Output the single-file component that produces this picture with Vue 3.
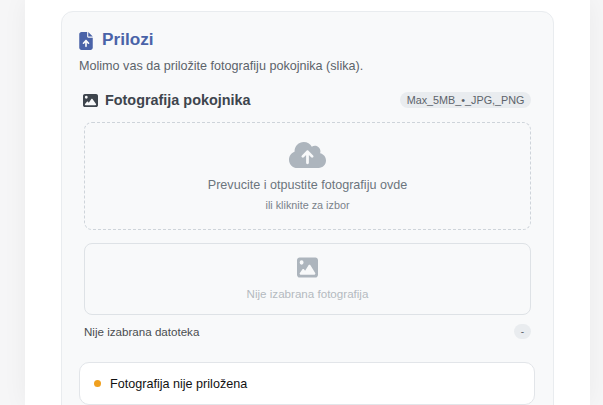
<template>
  <div class="page">
    <main class="shell">
      <section class="card">
        <h2 class="title">
          <svg class="title-icon" viewBox="0 0 384 512"><path d="M64 0C28.7 0 0 28.7 0 64V448c0 35.3 28.7 64 64 64H320c35.3 0 64-28.7 64-64V160H256c-17.7 0-32-14.3-32-32V0H64zM256 0V128H384L256 0zM216 408c0 13.3-10.7 24-24 24s-24-10.7-24-24V305.9l-31 31c-9.4 9.4-24.6 9.4-33.9 0s-9.4-24.6 0-33.9l72-72c9.4-9.4 24.6-9.4 33.9 0l72 72c9.4 9.4 9.4 24.6 0 33.9s-24.6 9.4-33.9 0l-31-31V408z"/></svg>
          <span class="title-text">Prilozi</span>
        </h2>
        <p class="lead">Molimo vas da priložite fotografiju pokojnika (slika).</p>
        <div class="upload">
          <div class="upload-head">
            <div class="label">
              <svg class="label-icon" viewBox="0 0 512 512"><path :d="imagePath"/></svg>
              <span>Fotografija pokojnika</span>
            </div>
            <span class="pill">Max_5MB_•_JPG,_PNG</span>
          </div>
          <div class="drop">
            <svg class="cloud" viewBox="0 0 640 512"><path d="M144 480C64.5 480 0 415.5 0 336c0-62.8 40.2-116.2 96.2-135.9c-.1-2.7-.2-5.4-.2-8.1c0-88.4 71.6-160 160-160c59.3 0 111 32.2 138.7 80.2C409.9 102 428.3 96 448 96c53 0 96 43 96 96c0 12.2-2.3 23.8-6.4 34.6C596 238.4 640 290.1 640 352c0 70.7-57.3 128-128 128H144zm79-217c-9.4 9.4-9.4 24.6 0 33.9s24.6 9.4 33.9 0l39-39V392c0 13.3 10.7 24 24 24s24-10.7 24-24V257.9l39 39c9.4 9.4 24.6 9.4 33.9 0s9.4-24.6 0-33.9l-80-80c-9.4-9.4-24.6-9.4-33.9 0l-80 80z"/></svg>
            <div class="drop-main">Prevucite i otpustite fotografiju ovde</div>
            <div class="drop-sub">ili kliknite za izbor</div>
          </div>
          <div class="preview">
            <svg class="preview-icon" viewBox="0 0 512 512" preserveAspectRatio="none"><path :d="imagePath"/></svg>
            <div class="preview-text">Nije izabrana fotografija</div>
          </div>
          <div class="file-row">
            <span class="file-name">Nije izabrana datoteka</span>
            <span class="file-size">-</span>
          </div>
        </div>
        <div class="status">
          <span class="dot"></span>
          <span>Fotografija nije priložena</span>
        </div>
      </section>
    </main>
  </div>
</template>

<script setup>
const imagePath = 'M0 96C0 60.7 28.7 32 64 32H448c35.3 0 64 28.7 64 64V416c0 35.3-28.7 64-64 64H64c-35.3 0-64-28.7-64-64V96zM323.8 202.5c-4.5-6.6-11.9-10.5-19.8-10.5s-15.4 3.9-19.8 10.5l-87 127.6L170.7 297c-4.6-5.7-11.5-9-18.7-9s-14.2 3.3-18.7 9l-64 80c-5.8 7.2-6.9 17.1-2.9 25.4s12.4 13.6 21.6 13.6h96 32H424c8.9 0 17.1-4.9 21.2-12.8s3.6-17.4-1.4-24.7l-120-176zM112 192a48 48 0 1 0 0-96 48 48 0 1 0 0 96z'
</script>

<style>
html, body { margin: 0; height: 405px; overflow: hidden; background: #f6f6f7; }
</style>

<style scoped>
.page {
  height: 405px;
  overflow: hidden;
  padding: 0 13px 0 25px;
  font-family: "Liberation Sans", Arial, sans-serif;
}
.shell {
  background: #fff;
  padding: 11px 36px 0;
  height: 405px;
  box-sizing: border-box;
  box-shadow: 0 0 24px rgba(0, 0, 0, 0.05);
}
.card {
  background: #f8f9fa;
  border: 1px solid #e9ecef;
  border-radius: 12px;
  padding: 18px 18px 18px 17px;
  height: 500px;
  box-sizing: border-box;
}
.title {
  display: flex;
  align-items: center;
  gap: 9px;
  margin: 0;
  height: 21px;
  font-size: 17.2px;
  font-weight: 700;
  line-height: 21px;
  color: #4a63a8;
}
.title-text { padding-bottom: 2px; }
.title-icon { width: 14px; height: 18px; fill: #4a63a8; flex: none; }
.lead { margin: 6px 0 0; font-size: 12.6px; line-height: 18px; color: #5c636a; }
.upload { padding: 0 4px 0 5px; }
.upload-head {
  display: flex;
  align-items: center;
  justify-content: space-between;
  margin-top: 16px;
  height: 18px;
}
.label {
  display: flex;
  align-items: center;
  gap: 7px;
  font-size: 14.4px;
  font-weight: 700;
  color: #3e454d;
}
.label-icon { width: 15px; height: 15px; fill: #3e454d; margin-left: -1px; }
.pill {
  padding: 0 6.5px;
  border-radius: 10px;
  background: #e9ecef;
  font-size: 10.8px;
  line-height: 16px;
  color: #5c636a;
}
.drop {
  margin-top: 13px;
  height: 108px;
  box-sizing: border-box;
  border: 1px dashed #ced4da;
  border-radius: 8px;
  padding-top: 17px;
  display: flex;
  flex-direction: column;
  align-items: center;
}
.cloud { width: 37px; height: 30px; fill: #adb5bd; }
.drop-main { margin-top: 7px; font-size: 12.6px; line-height: 16px; color: #6c757d; }
.drop-sub { margin-top: 5px; font-size: 10.8px; line-height: 14px; color: #7a828a; }
.preview {
  margin-top: 13px;
  height: 72px;
  box-sizing: border-box;
  border: 1px solid #dee2e6;
  border-radius: 8px;
  padding-top: 12px;
  display: flex;
  flex-direction: column;
  align-items: center;
}
.preview-icon { width: 21px; height: 23px; fill: #adb5bd; }
.preview-text { margin-top: 7px; font-size: 11.6px; line-height: 16px; color: #b4bac0; }
.file-row {
  display: flex;
  justify-content: space-between;
  align-items: center;
  margin-top: 8px;
  height: 16px;
}
.file-name { font-size: 11.6px; color: #4a4d50; }
.file-size {
  width: 17px;
  height: 15px;
  border-radius: 8px;
  background: #e9ecef;
  font-size: 10px;
  line-height: 15px;
  text-align: center;
  color: #5c636a;
}
.status {
  display: flex;
  align-items: center;
  gap: 9px;
  margin-top: 23px;
  height: 43px;
  box-sizing: border-box;
  padding: 0 14px;
  background: #fff;
  border: 1px solid #e2e5e9;
  border-radius: 10px;
  font-size: 12.6px;
  color: #111;
}
.dot { width: 7px; height: 7px; border-radius: 50%; background: #f0a01e; flex: none; }
</style>
